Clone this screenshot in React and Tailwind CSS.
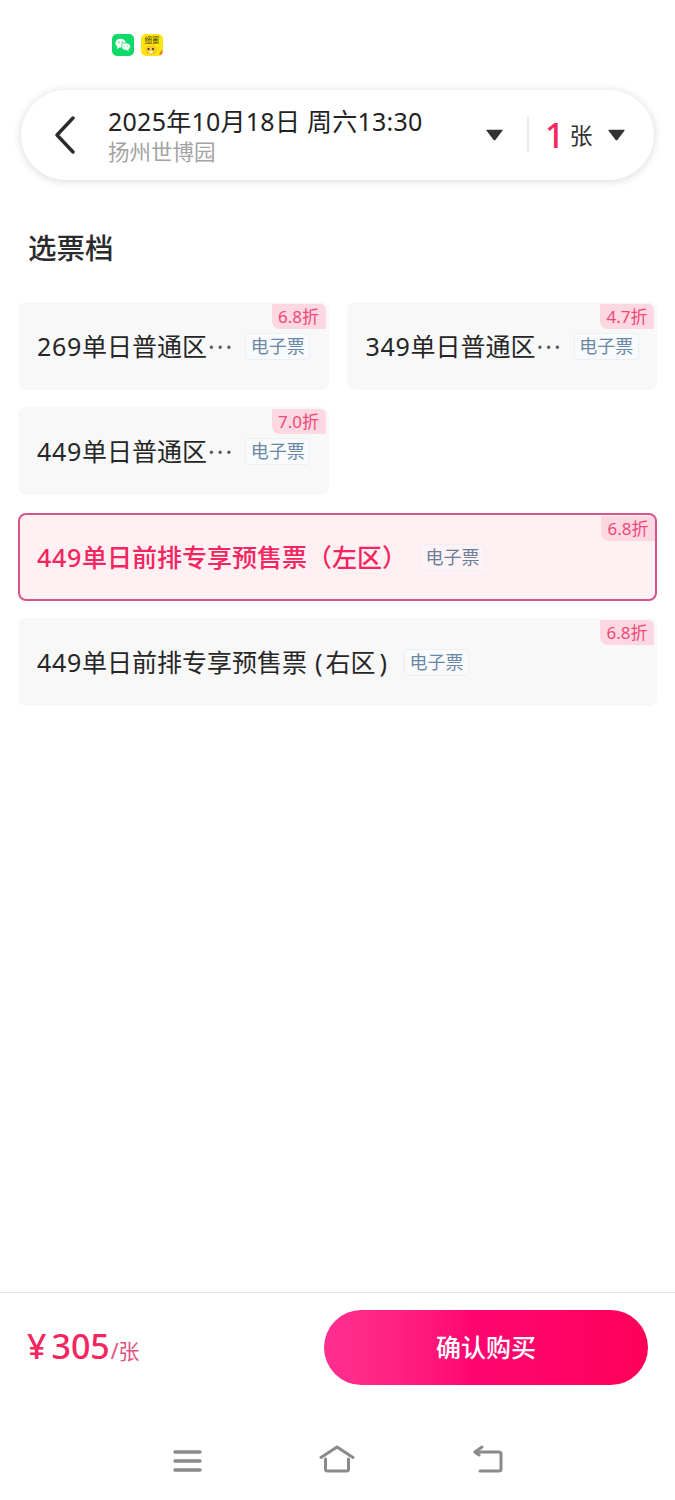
function Caret() {
  return (
    <svg width="19" height="13" viewBox="0 0 18 12" className="block">
      <path d="M1.5 1.5 Q0.5 0.5 2 0.5 H16 Q17.5 0.5 16.5 1.5 L10 10 Q9 11.2 8 10 Z" fill="#333" />
    </svg>
  );
}

function Card({ num, name, off, selected, pad, children, extra = "" }) {
  return (
    <div
      className={`relative h-[88px] rounded-lg flex items-center ${extra} ${
        selected ? "bg-[#fff0f3] border-2 border-[#d5558b] pl-[17px]" : "bg-[#f8f8f8] pl-[19px]"
      }`}
    >
      <span
        className={`text-[25px] leading-[34px] whitespace-nowrap ${
          selected ? "text-[#f4255f] font-medium" : "text-[#262626]"
        }`}
      >
        <span className="tracking-[0.7px]">{num}</span>
        {name}
        {children}
      </span>
      <span
        className={`${pad} h-[27px] w-[65px] shrink-0 rounded-[4px] border border-[#eceff3] flex items-center justify-center text-[18px] leading-none ${
          selected ? "bg-[#fdf3f6] text-[#6e7d96]" : "bg-[#f8fafc] text-[#6a88a5]"
        }`}
      >
        电子票
      </span>
      <span
        className={`absolute ${selected ? "top-[1px] right-0" : "top-[2px] right-[3px]"} h-[25px] w-[54px] bg-[#fdd7e1] rounded-tr-md rounded-bl-lg flex items-center justify-center text-[17px] leading-none text-[#ee4a78]`}
      >
        {off}
      </span>
    </div>
  );
}

function Dots() {
  return <span className="ml-[1px] tracking-[2px] text-[#555]">···</span>;
}

export default function App() {
  return (
    <div
      className="h-[1500px] w-[675px] bg-white flex flex-col overflow-hidden"
      style={{ fontFamily: '"Noto Sans", "Noto Sans CJK SC", sans-serif' }}
    >
      <div className="flex gap-[7px] pl-[112px] pt-[34px]">
        <svg width="22" height="22" viewBox="0 0 22 22">
          <rect width="22" height="22" rx="5" fill="#0fd968" />
          <ellipse cx="8.6" cy="9.2" rx="5.2" ry="4.4" fill="#fff" />
          <path d="M5.6 12 L5 15 L8 13 Z" fill="#fff" />
          <ellipse cx="14" cy="12.6" rx="4.4" ry="3.7" fill="#fff" stroke="#0fd968" strokeWidth="0.8" />
          <path d="M16 15.5 L17 17.5 L14.5 16 Z" fill="#fff" />
          <circle cx="7" cy="8.2" r="0.8" fill="#0fd968" />
          <circle cx="10.2" cy="8.2" r="0.8" fill="#0fd968" />
          <circle cx="12.6" cy="12" r="0.6" fill="#0fd968" />
          <circle cx="15.4" cy="12" r="0.6" fill="#0fd968" />
        </svg>
        <svg width="22" height="22" viewBox="0 0 22 22">
          <rect width="22" height="22" rx="5" fill="#fde60d" />
          <text x="11" y="9" textAnchor="middle" fontSize="7.5" fill="#4a4000" fontFamily="Noto Sans CJK SC">细蜜</text>
          <ellipse cx="10" cy="16" rx="6" ry="4.8" fill="#fcc62d" />
          <circle cx="7.5" cy="15" r="1" fill="#222" />
          <circle cx="12" cy="15" r="1" fill="#222" />
          <ellipse cx="10" cy="18.2" rx="1.8" ry="1.1" fill="#fff" />
          <path d="M18 20 L21.5 15.5 V18 Q21.5 20.5 19 21 Z" fill="#ef6a3b" />
        </svg>
      </div>

      <div className="mx-[21px] mt-[34px] h-[90px] w-[633px] rounded-full bg-white shadow-[0_1px_10px_rgba(0,0,0,0.16)] flex items-center">
        <svg width="22" height="38" viewBox="0 0 22 38" className="ml-[33px] shrink-0">
          <path d="M19 2 L3 19 L19 36" fill="none" stroke="#2a2a2a" strokeWidth="3.4" strokeLinecap="round" strokeLinejoin="round" />
        </svg>
        <div className="ml-[32px] w-[377px] flex flex-col mt-[3px]">
          <span className="text-[25px] leading-[31px] tracking-[0.25px] text-[#222] whitespace-nowrap">2025年10月18日 周六13:30</span>
          <span className="text-[21.5px] leading-[30px] text-[#a3a3a3] whitespace-nowrap">扬州世博园</span>
        </div>
        <Caret />
        <div className="ml-[23px] h-[36px] w-[2px] bg-[#ececec]" />
        <span className="ml-[16px] text-[34px] leading-none font-medium text-[#f5265f]">1</span>
        <span className="ml-[5px] text-[23px] leading-none text-[#333]">张</span>
        <span className="ml-[15px]"><Caret /></span>
      </div>

      <h2 className="mt-[49px] ml-[28px] text-[28.5px] leading-[38px] font-medium text-[#2b2b2b]">选票档</h2>

      <div className="mt-[35px] mx-[18px] w-[639px] flex flex-col gap-[17px]">
        <div className="grid grid-cols-2 gap-x-[18px] gap-y-[17px]">
          <Card num="269" name="单日普通区" off="6.8折" pad="ml-[11px]"><Dots /></Card>
          <Card num="349" name="单日普通区" off="4.7折" pad="ml-[11px]"><Dots /></Card>
          <Card num="449" name="单日普通区" off="7.0折" pad="ml-[11px]"><Dots /></Card>
        </div>
        <Card num="449" name="单日前排专享预售票（左区）" off="6.8折" selected pad="ml-[13px]" extra="mt-px" />
        <Card num="449" name="单日前排专享预售票" off="6.8折" pad="ml-[17px]">
          <span className="ml-[8px] mr-[3px]">(</span>
          右区
          <span className="ml-[4px]">)</span>
        </Card>
      </div>

      <div className="mt-auto h-[208px] border-t border-[#e6e6e6] flex flex-col">
        <div className="mt-[17px] flex items-center justify-between pl-[27px] pr-[27px]">
          <div className="flex items-baseline text-[#f4255f] -mt-[4px]">
            <span className="text-[34px] leading-none font-medium">¥</span>
            <span className="ml-[5px] text-[34px] leading-none font-medium">305</span>
            <span className="ml-[1px] text-[21px] leading-none text-[#e0527f]">/张</span>
          </div>
          <button className="h-[75px] w-[324px] rounded-full bg-gradient-to-r from-[#ff2f90] via-[#ff0572] via-45% to-[#ff0058] text-white text-[25px] font-medium leading-none">
            确认购买
          </button>
        </div>
        <div className="mt-[60px] flex items-start pl-[172px]">
          <svg width="31" height="24" viewBox="0 0 31 24" className="mt-[4px]">
            <path d="M3 3 H28 M3 12 H28 M3 21 H28" stroke="#8a8a8a" strokeWidth="3.4" strokeLinecap="round" />
          </svg>
          <svg width="36" height="28" viewBox="0 0 36 28" className="ml-[116px]">
            <path d="M2 12.5 L18 2 L34 12.5" fill="none" stroke="#8a8a8a" strokeWidth="3" strokeLinecap="round" strokeLinejoin="round" />
            <path d="M6.5 14 V24 Q6.5 26 8.5 26 H27.5 Q29.5 26 29.5 24 V14" fill="none" stroke="#8a8a8a" strokeWidth="3" strokeLinecap="round" />
          </svg>
          <svg width="32" height="28" viewBox="0 0 32 28" className="ml-[117px]">
            <path d="M3 7 H27 Q29 7 29 9 V24 Q29 26 27 26 H8" fill="none" stroke="#8a8a8a" strokeWidth="3" strokeLinecap="round" />
            <path d="M10 2 L3 7 L7 10" fill="none" stroke="#8a8a8a" strokeWidth="3" strokeLinecap="round" strokeLinejoin="round" />
          </svg>
        </div>
      </div>
    </div>
  );
}
